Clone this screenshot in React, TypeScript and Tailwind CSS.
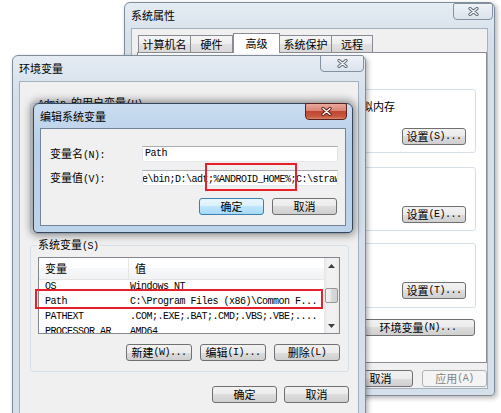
import React from 'react';

const MONO = "font-['Liberation_Mono',monospace] text-[10px] tracking-[-0.5px]";

// ascii runs get the narrow mono face (like SimSun half-width), cjk keeps the base font
const T: React.FC<{ s: string }> = ({ s }) => (
  <>
    {s
      .split(/([\x20-\x7e]+)/)
      .filter(Boolean)
      .map((p, i) =>
        /^[\x20-\x7e]/.test(p) ? (
          <span key={i} className={MONO}>
            {p}
          </span>
        ) : (
          <span key={i}>{p}</span>
        )
      )}
  </>
);

type BtnKind = 'normal' | 'focus' | 'disabled';

const btnKinds: Record<BtnKind, string> = {
  normal: 'border-[#707070] bg-[linear-gradient(#f2f2f2,#ebebeb_50%,#dddddd_50%,#cfcfcf)]',
  focus: 'border-[#3c7fb1] bg-[linear-gradient(#eaf6fd,#d9f0fc_50%,#bee6fd_50%,#a7d9f5)]',
  disabled: 'border-[#adb2b5] bg-[#f4f4f4] text-[#838383]',
};

const Btn: React.FC<{ label: string; className?: string; kind?: BtnKind }> = ({
  label,
  className = 'w-[65px]',
  kind = 'normal',
}) => (
  <div
    className={`h-[17px] shrink-0 flex items-center justify-center rounded-[3px] border whitespace-nowrap ${btnKinds[kind]} ${className}`}
  >
    <T s={label} />
  </div>
);

const CloseX: React.FC<{ red?: boolean }> = ({ red }) => (
  <svg width="11" height="9" viewBox="0 0 11 9">
    <path d="M2 1.5 9 7.5 M9 1.5 2 7.5" stroke={red ? '#5a1a14' : '#5b6674'} strokeWidth="3.2" strokeLinecap="round" />
    <path d="M2 1.5 9 7.5 M9 1.5 2 7.5" stroke={red ? '#ffffff' : '#f5f7f9'} strokeWidth="1.4" strokeLinecap="round" />
  </svg>
);

interface WinProps {
  className: string;
  title: string;
  active?: boolean;
  titleClass?: string;
  closeClass: string;
  children: React.ReactNode;
}

const Win: React.FC<WinProps> = ({ className, title, active, titleClass = 'h-[25px]', closeClass, children }) => (
  <div
    className={`absolute flex flex-col px-[6px] pb-[6px] border rounded-t-[6px] rounded-b-[4px] ${
      active
        ? 'border-[#34475c] bg-[linear-gradient(#cadcf0,#b9d0e9_40px,#bdd3ea)] shadow-[0_0_9px_2px_rgba(0,0,0,0.45)]'
        : 'border-[#7f8c9a] bg-[linear-gradient(#e5ecf3,#d4dfea_40px,#d6e0eb)] shadow-[2px_2px_5px_rgba(0,0,0,0.3)]'
    } ${className}`}
  >
    {/* title bar */}
    <div className={`flex justify-between items-start shrink-0 ${titleClass}`}>
      <span className="self-center">{title}</span>
      <div
        className={`h-[17px] flex items-center justify-center rounded-b-[4px] rounded-t-[2px] border ${
          active
            ? 'border-[#5b2120] bg-[linear-gradient(#e8a99c,#d98474_45%,#c24632_50%,#c75a40_85%,#d88a6a)]'
            : 'border-[#8391a0] bg-[linear-gradient(#eef2f7,#dbe3ec)]'
        } ${closeClass}`}
      >
        <CloseX red={active} />
      </div>
    </div>
    {/* client area */}
    <div
      className={`flex-1 min-h-0 relative overflow-hidden border bg-[#f0f0f0] ${
        active ? 'border-[#71849a]' : 'border-[#a3b0be]'
      }`}
    >
      {children}
    </div>
  </div>
);

const Group: React.FC<{ label: string; className: string; labelBg: string; children?: React.ReactNode }> = ({
  label,
  className,
  labelBg,
  children,
}) => (
  <div className={`relative shrink-0 border border-[#d5dfe5] rounded-[3px] flex flex-col ${className}`}>
    <span className={`absolute -top-[7px] left-[6px] px-[1px] whitespace-nowrap ${labelBg}`}>
      <T s={label} />
    </span>
    {children}
  </div>
);

const tabs = [
  { name: '计算机名', w: 'w-[53px] border-l' },
  { name: '硬件', w: 'w-[42px]' },
  { name: '高级', w: 'w-[47px]', on: true },
  { name: '系统保护', w: 'w-[52px]' },
  { name: '远程', w: 'w-[41px]' },
];

const perfGroups = [
  {
    label: '性能',
    text: '视觉效果，处理器计划，内存使用，以及虚拟内存',
    btn: '设置(S)...',
    cls: 'h-[64px]',
    line: 'justify-end pr-[71px]',
  },
  { label: '用户配置文件', text: '与您登录有关的桌面设置', btn: '设置(E)...', cls: 'h-[64px] mt-[14px]', line: 'pl-[2px]' },
  { label: '启动和故障恢复', text: '系统启动、系统失败和调试信息', btn: '设置(T)...', cls: 'h-[65px] mt-[12px]', line: 'pl-[2px]' },
];

const sysVars = [
  ['OS', 'Windows_NT'],
  ['Path', 'C:\\Program Files (x86)\\Common F...'],
  ['PATHEXT', '.COM;.EXE;.BAT;.CMD;.VBS;.VBE;....'],
  ['PROCESSOR_AR', 'AMD64'],
];

const Arrow: React.FC<{ down?: boolean }> = ({ down }) => (
  <svg width="7" height="4" viewBox="0 0 7 4">
    <path d={down ? 'M0 0h7L3.5 4z' : 'M0 4h7L3.5 0z'} fill="#3f3f3f" />
  </svg>
);

export default function App() {
  return (
    <div className="relative w-[501px] h-[413px] overflow-hidden bg-white font-['Noto_Sans_CJK_SC',sans-serif] text-[11px] leading-none text-black">
      {/* 系统属性 */}
      <Win className="left-[124px] top-[2px] w-[371px] h-[394px]" title="系统属性" closeClass="w-[40px] -mr-[5px]">
        <div className="flex flex-col h-full">
          <div className="flex items-end h-[23px] pl-[6px] shrink-0">
            {tabs.map((t) =>
              t.on ? (
                <div
                  key={t.name}
                  className={`relative z-10 h-[20px] -mb-[1px] flex items-center justify-center bg-white border border-b-0 border-[#898c95] ${t.w}`}
                >
                  {t.name}
                </div>
              ) : (
                <div
                  key={t.name}
                  className={`h-[17px] flex items-center justify-center border-t border-r border-[#898c95] bg-[linear-gradient(#f5f5f5,#ededed_50%,#e2e2e2_50%,#d8d8d8)] ${t.w}`}
                >
                  {t.name}
                </div>
              )
            )}
          </div>

          <div className="ml-[5px] w-[350px] h-[311px] shrink-0 bg-white border border-[#898c95] flex flex-col pl-[6px] pr-[10px]">
            <div className="h-[36px] shrink-0 pt-[12px] pl-[4px] whitespace-nowrap">要进行大多数更改，您必须作为管理员登录。</div>
            {perfGroups.map((g) => (
              <Group key={g.label} label={g.label} labelBg="bg-white" className={`pl-[8px] pr-[9px] pt-[10px] ${g.cls}`}>
                <div className={`h-[13px] flex items-center whitespace-nowrap ${g.line}`}>
                  <span>{g.text}</span>
                </div>
                <Btn label={g.btn} className="w-[64px] self-end mt-[15px]" />
              </Group>
            ))}
            <Btn label="环境变量(N)..." className="w-[114px] self-end mr-[1px] mt-[11px]" />
          </div>

          <div className="flex justify-end gap-[9px] mt-[7px]">
            <Btn label="确定" />
            <Btn label="取消" />
            <Btn label="应用(A)" kind="disabled" />
          </div>
        </div>
      </Win>

      {/* 环境变量 */}
      <Win className="left-[12px] top-[55px] w-[354px] h-[372px]" title="环境变量" closeClass="w-[44px] -mt-[1px] -mr-[5px]">
        <div className="flex flex-col">
          <Group label="Admin 的用户变量(U)" labelBg="bg-[#f0f0f0]" className="ml-[10px] mt-[21px] w-[319px] h-[131px]" />

          <Group label="系统变量(S)" labelBg="bg-[#f0f0f0]" className="ml-[10px] mt-[11px] w-[319px] h-[127px] pl-[7px] pr-[8px] pt-[11px]">
            {/* list view */}
            <div className="h-[77px] shrink-0 border border-[#828790] bg-white flex">
              <div className="flex-1 min-w-0 flex flex-col">
                <div className="h-[22px] shrink-0 flex border-b border-[#e5e5e5] bg-[linear-gradient(#ffffff,#ffffff_50%,#f7f8fa_50%,#f1f2f4)]">
                  <div className="w-[90px] pl-[6px] flex items-center border-r border-[#e5e5e5]">变量</div>
                  <div className="pl-[6px] flex items-center">值</div>
                </div>
                <div className="flex-1 overflow-hidden">
                  <div className="-mt-[2px]">
                    {sysVars.map(([k, v]) => (
                      <div key={k} className="h-[15px] flex items-center whitespace-nowrap">
                        <div className="w-[90px] pl-[6px] shrink-0">
                          <T s={k} />
                        </div>
                        <div className="pl-[1px]">
                          <T s={v} />
                        </div>
                      </div>
                    ))}
                  </div>
                </div>
              </div>
              {/* scrollbar */}
              <div className="w-[15px] shrink-0 flex flex-col bg-[linear-gradient(90deg,#e6e6e6,#f1f1f1_25%,#f1f1f1_80%,#e9e9e9)]">
                <div className="h-[15px] flex items-center justify-center">
                  <Arrow />
                </div>
                <div className="mt-[15px] mx-[1px] h-[15px] rounded-[2px] border border-[#979797] bg-[linear-gradient(90deg,#f3f3f3,#e8e8e8_50%,#d9d9d9_50%,#d2d2d2)]" />
                <div className="flex-1" />
                <div className="h-[15px] flex items-center justify-center">
                  <Arrow down />
                </div>
              </div>
            </div>

            <div className="flex justify-end gap-[8px] mt-[10px]">
              <Btn label="新建(W)..." className="w-[66px]" />
              <Btn label="编辑(I)..." className="w-[66px]" />
              <Btn label="删除(L)" className="w-[66px]" />
            </div>

            {/* red mark on the Path row */}
            <div className="absolute left-[4px] top-[43px] w-[288px] h-[20px] border-2 border-[#e8202a]" />
          </Group>

          <div className="ml-[10px] w-[319px] flex justify-end gap-[7px] mt-[14px]">
            <Btn label="确定" />
            <Btn label="取消" />
          </div>
        </div>
      </Win>

      {/* 编辑系统变量 */}
      <Win
        className="left-[33px] top-[103px] w-[320px] h-[130px]"
        title="编辑系统变量"
        active
        titleClass="h-[24px]"
        closeClass="w-[42px] -mt-[1px] -mr-[1px]"
      >
        <div className="flex flex-col pl-[9px] pt-[17px]">
          <div className="flex items-center h-[16px]">
            <div className="w-[92px] whitespace-nowrap">
              <T s="变量名(N):" />
            </div>
            <div className="w-[196px] h-[16px] flex items-center pl-[2px] bg-white border border-[#abadb3] border-l-[#e2e3ea] border-r-[#e2e3ea] border-b-[#e3e9ef]">
              <T s="Path" />
            </div>
          </div>
          <div className="flex items-center h-[16px] mt-[8px]">
            <div className="w-[92px] whitespace-nowrap">
              <T s="变量值(V):" />
            </div>
            <div className="relative w-[196px] h-[16px] bg-white border border-[#abadb3] border-l-[#e2e3ea] border-r-[#e2e3ea] border-b-[#e3e9ef]">
              <div className="w-full h-full overflow-hidden flex items-center whitespace-nowrap">
                <span className="-ml-[1px]">
                  <T s={'e\\bin;D:\\adt;%ANDROID_HOME%;C:\\strawberry\\c\\bin'} />
                </span>
              </div>
              <div className="absolute -top-[8px] left-[62px] w-[92px] h-[28px] border-2 border-[#e8202a]" />
            </div>
          </div>
          <div className="w-[288px] flex justify-end gap-[8px] pr-[1px] mt-[12px]">
            <Btn label="确定" kind="focus" />
            <Btn label="取消" />
          </div>
        </div>
      </Win>
    </div>
  );
}
